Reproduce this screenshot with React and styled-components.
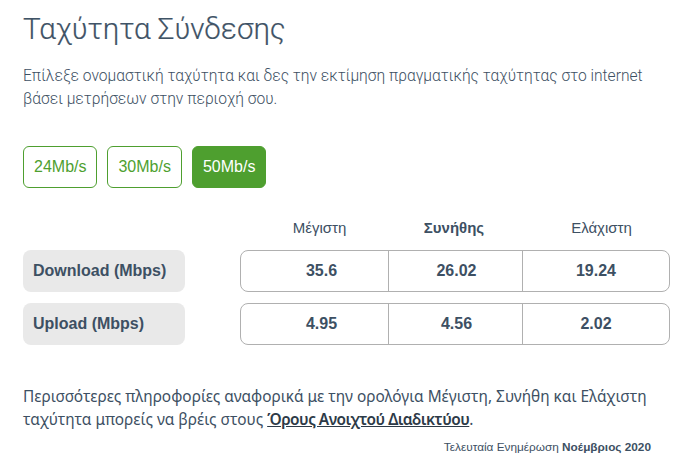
import { useState } from "react";
import styled, { createGlobalStyle } from "styled-components";

const Global = createGlobalStyle`
    body {
        margin: 0;
        background: #ffffff;
        font-family: "Liberation Sans", Arial, sans-serif;
        color: #3d5063;
    }
`;

const speeds = ["24Mb/s", "30Mb/s", "50Mb/s"];
const rows = [
    { label: "Download (Mbps)", values: ["35.6", "26.02", "19.24"] },
    { label: "Upload (Mbps)", values: ["4.95", "4.56", "2.02"] },
];
const shifts = [14, 2, 0];

export default function App() {
    const [active, setActive] = useState(2);
    return (
        <Page>
            <Global />
            <Title>Ταχύτητα Σύνδεσης</Title>
            <Intro>
                Επίλεξε ονομαστική ταχύτητα και δες την εκτίμηση πραγματικής ταχύτητας στο internet
                <br />
                βάσει μετρήσεων στην περιοχή σου.
            </Intro>
            <Choices>
                {speeds.map((s, i) => (
                    <Choice key={s} $active={i === active} onClick={() => setActive(i)}>
                        {s}
                    </Choice>
                ))}
            </Choices>
            <Table>
                <Spacer />
                <Heads>
                    <Head $shift={12}>Μέγιστη</Head>
                    <Head $bold>Συνήθης</Head>
                    <Head $shift={12}>Ελάχιστη</Head>
                </Heads>
                {rows.map((r) => (
                    <Row key={r.label}>
                        <Label>{r.label}</Label>
                        <Values>
                            {r.values.map((v, i) => (
                                <Cell key={i} $shift={shifts[i]}>
                                    {v}
                                </Cell>
                            ))}
                        </Values>
                    </Row>
                ))}
            </Table>
            <Note>
                Περισσότερες πληροφορίες αναφορικά με την ορολόγια Μέγιστη, Συνήθη και Ελάχιστη
                <br />
                ταχύτητα μπορείς να βρέις στους <Link href="#">Όρους Ανοιχτού Διαδικτύου</Link>.
            </Note>
            <Updated>
                Τελευταία Ενημέρωση <b>Νοέμβριος 2020</b>
            </Updated>
        </Page>
    );
}

const Page = styled.div`
    width: 677px;
    height: 461px;
    box-sizing: border-box;
    padding: 9px 7px 0 23px;
    overflow: hidden;
`;

const Title = styled.h1`
    margin: 0;
    font-family: Roboto, "Liberation Sans", sans-serif;
    font-weight: 300;
    font-size: 29.6px;
    line-height: 41px;
    -webkit-text-stroke: 0.2px #3f5366;
    color: #3f5366;
`;

const Intro = styled.p`
    margin: 15px 0 0;
    font-family: Roboto, "Liberation Sans", sans-serif;
    font-weight: 300;
    font-size: 15.6px;
    line-height: 23px;
    white-space: nowrap;
    color: #3d5063;
`;

const Choices = styled.div`
    display: flex;
    gap: 10px;
    margin-top: 35px;
`;

const Choice = styled.button`
    height: 42px;
    padding: 0 10px;
    border: 1px solid #4e9f2f;
    border-radius: 6px;
    background: ${(p) => (p.$active ? "#4e9f2f" : "#ffffff")};
    color: ${(p) => (p.$active ? "#ffffff" : "#4e9f2f")};
    font-family: "Liberation Sans", Arial, sans-serif;
    font-size: 16px;
    cursor: pointer;
`;

const Table = styled.div`
    display: grid;
    grid-template-columns: 162px 430px;
    column-gap: 55px;
    row-gap: 11px;
    margin-top: 24px;
`;

const Spacer = styled.div``;

const Row = styled.div`
    display: contents;
`;

const Triple = styled.div`
    display: grid;
    grid-template-columns: 147px 134px 1fr;
`;

const Heads = styled(Triple)`
    height: 30px;
    align-items: center;
    margin-bottom: -3px;
`;

const Head = styled.div`
    padding-left: ${(p) => p.$shift || 0}px;
    text-align: center;
    font-size: 15px;
    font-weight: ${(p) => (p.$bold ? 700 : 400)};
    color: #3d5063;
`;

const Label = styled.div`
    display: flex;
    align-items: center;
    height: 42px;
    padding-left: 10px;
    border-radius: 8px;
    background: #e9e9e9;
    font-size: 16px;
    font-weight: 700;
    color: #3d5063;
`;

const Values = styled(Triple)`
    height: 42px;
    box-sizing: border-box;
    border: 1px solid #b0b0b0;
    border-radius: 8px;
`;

const Cell = styled.div`
    display: flex;
    align-items: center;
    justify-content: center;
    padding-left: ${(p) => p.$shift}px;
    font-size: 16px;
    font-weight: 700;
    color: #3d5063;
    & + & {
        border-left: 1px solid #b0b0b0;
    }
`;

const Note = styled.p`
    margin: 40px 0 0;
    font-family: "Noto Sans", "Liberation Sans", sans-serif;
    font-weight: 400;
    font-size: 15.4px;
    line-height: 23px;
    white-space: nowrap;
    color: #3d5063;
`;

const Link = styled.a`
    color: #2d3a47;
    font-weight: 600;
    letter-spacing: -0.5px;
    text-decoration: underline;
`;

const Updated = styled.div`
    margin-top: 9px;
    padding-right: 19px;
    text-align: right;
    font-size: 11.8px;
    color: #3d5063;
`;
